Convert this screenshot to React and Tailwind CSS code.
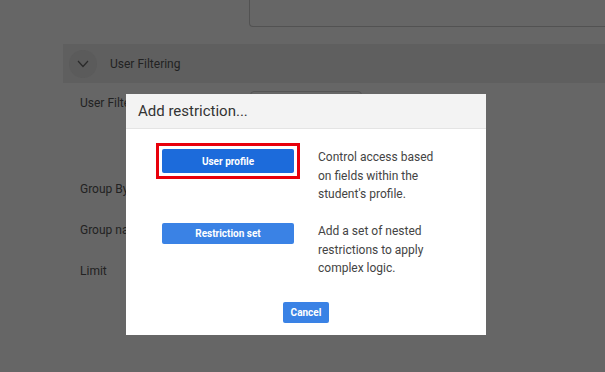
import React from 'react';

const font = { fontFamily: 'Roboto, "Liberation Sans", sans-serif' };

const Chevron = () => (
  <svg width="12" height="8" viewBox="0 0 12 8" fill="none">
    <polyline points="1,1 6,6.5 11,1" stroke="#2a2a2a" strokeWidth="1.2" />
  </svg>
);

const FieldRow = ({ label, height, children }) => (
  <div className={`flex items-start pl-[80px] ${height}`}>
    <div className="w-[170px] text-[12px] leading-[24px] text-[#222]">{label}</div>
    {children}
  </div>
);

const Option = ({ label, focused, lines }) => (
  <div className="flex items-start">
    <div className="w-[132px] mt-[1px]">
      {focused ? (
        <div className="-m-[6px] border-[3px] border-[#e8000b] p-[3px]">
          <button className="block w-full h-[24px] rounded-[2px] bg-[#1c6bdb] text-white text-[10px] font-bold">
            {label}
          </button>
        </div>
      ) : (
        <button className="block w-full h-[21px] rounded-[2px] bg-[#3a82e5] text-white text-[10px] font-bold">
          {label}
        </button>
      )}
    </div>
    <p className="ml-[24px] w-[126px] text-[12px] leading-[18.5px] text-[#444]">
      {lines.map((l, i) => (
        <span key={i} className="block">{l}</span>
      ))}
    </p>
  </div>
);

export default function App() {
  return (
    <div className="relative w-[605px] h-[372px] overflow-hidden bg-[#666666]" style={font}>
      {/* page behind the overlay */}
      <div className="ml-[249px] h-[27px] border-l border-b border-[#525252] rounded-bl-[4px]" />
      <div className="mt-[17px] ml-[63px] h-[39px] bg-[#5f5f5f] flex items-center pl-[6px]">
        <div className="w-[28px] h-[28px] rounded-full bg-[#5b5b5b] flex items-center justify-center">
          <Chevron />
        </div>
        <span className="ml-[13px] text-[12px] text-[#222]">User Filtering</span>
      </div>
      <div className="mt-[8px]">
        <FieldRow label="User Filter" height="h-[86px]">
          <div className="w-[112px] h-[30px] border border-[#545454] rounded-[4px]" />
        </FieldRow>
        <FieldRow label="Group By" height="h-[41px]" />
        <FieldRow label="Group name" height="h-[41px]" />
        <FieldRow label="Limit" height="h-[41px]" />
      </div>

      {/* dialog */}
      <div className="absolute left-[126px] top-[94px] w-[360px] h-[241px] bg-white flex flex-col">
        <div className="h-[35px] bg-[#f3f3f3] border-b border-[#e4e4e4] pl-[12px] flex items-center">
          <h2 className="text-[15px] text-[#333]">Add restriction...</h2>
        </div>
        <div className="pl-[36px] pt-[19px] flex flex-col gap-[18.5px]">
          <Option
            label="User profile"
            focused
            lines={['Control access based', 'on fields within the', "student's profile."]}
          />
          <Option
            label="Restriction set"
            lines={['Add a set of nested', 'restrictions to apply', 'complex logic.']}
          />
        </div>
        <div className="mt-[24px] flex justify-center">
          <button className="w-[46px] h-[21px] rounded-[2px] bg-[#3a82e5] text-white text-[10px] font-bold">
            Cancel
          </button>
        </div>
      </div>
    </div>
  );
}
